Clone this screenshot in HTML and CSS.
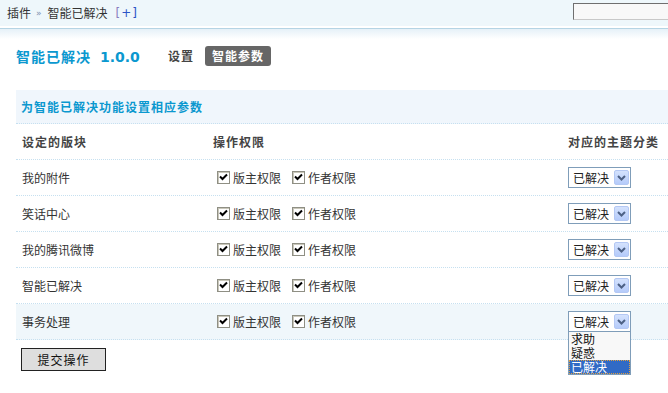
FILE: index.html
```html
<!DOCTYPE html>
<html lang="zh-CN">
<head>
<meta charset="utf-8">
<title>智能已解决</title>
<link rel="stylesheet" href="styles.css">
</head>
<body>
<div class="topbar">
  <div class="crumbs">
    <span>插件</span><span class="sep">»</span><span>智能已解决</span><a class="add"><span class="br">[</span>+<span class="br2">]</span></a>
  </div>
  <input class="search" type="text">
</div>
<div class="topline"></div>
<div class="main">
  <div class="titlebar">
    <h1 class="title">智能已解决<span class="ver">1.0.0</span></h1>
    <a class="tab">设置</a>
    <a class="tab active">智能参数</a>
  </div>
  <div class="grid">
    <div class="caption">为智能已解决功能设置相应参数</div>
    <div class="row heads"><div class="c1">设定的版块</div><div class="c2">操作权限</div><div class="c3">对应的主题分类</div></div>

    <div class="row">
      <div class="c1">我的附件</div>
      <div class="c2"><label class="chk"><input type="checkbox" checked>版主权限</label><label class="chk"><input type="checkbox" checked>作者权限</label></div>
      <div class="c3"><span class="sel"><span class="val">已解决</span><span class="arrow"><svg width="9" height="6" viewBox="0 0 9 6"><path d="M1 1 L4.5 4.5 L8 1" fill="none" stroke="#4d6185" stroke-width="2"/></svg></span></span></div>
    </div>
    <div class="row">
      <div class="c1">笑话中心</div>
      <div class="c2"><label class="chk"><input type="checkbox" checked>版主权限</label><label class="chk"><input type="checkbox" checked>作者权限</label></div>
      <div class="c3"><span class="sel"><span class="val">已解决</span><span class="arrow"><svg width="9" height="6" viewBox="0 0 9 6"><path d="M1 1 L4.5 4.5 L8 1" fill="none" stroke="#4d6185" stroke-width="2"/></svg></span></span></div>
    </div>
    <div class="row">
      <div class="c1">我的腾讯微博</div>
      <div class="c2"><label class="chk"><input type="checkbox" checked>版主权限</label><label class="chk"><input type="checkbox" checked>作者权限</label></div>
      <div class="c3"><span class="sel"><span class="val">已解决</span><span class="arrow"><svg width="9" height="6" viewBox="0 0 9 6"><path d="M1 1 L4.5 4.5 L8 1" fill="none" stroke="#4d6185" stroke-width="2"/></svg></span></span></div>
    </div>
    <div class="row">
      <div class="c1">智能已解决</div>
      <div class="c2"><label class="chk"><input type="checkbox" checked>版主权限</label><label class="chk"><input type="checkbox" checked>作者权限</label></div>
      <div class="c3"><span class="sel"><span class="val">已解决</span><span class="arrow"><svg width="9" height="6" viewBox="0 0 9 6"><path d="M1 1 L4.5 4.5 L8 1" fill="none" stroke="#4d6185" stroke-width="2"/></svg></span></span></div>
    </div>
    <div class="row hover">
      <div class="c1">事务处理</div>
      <div class="c2"><label class="chk"><input type="checkbox" checked>版主权限</label><label class="chk"><input type="checkbox" checked>作者权限</label></div>
      <div class="c3"><span class="sel open"><span class="val">已解决</span><span class="arrow"><svg width="9" height="6" viewBox="0 0 9 6"><path d="M1 1 L4.5 4.5 L8 1" fill="none" stroke="#4d6185" stroke-width="2"/></svg></span>
        <ul class="options"><li>求助</li><li>疑惑</li><li class="selected">已解决</li></ul>
      </span></div>
    </div>
  </div>
  <button class="submit" type="button">提交操作</button>
</div>
</body>
</html>
```

FILE: styles.css
```css
html, body {
  margin: 0;
  padding: 0;
  background: #fff;
  overflow: hidden;
}
body {
  font-family: "Noto Sans CJK SC", "Liberation Sans", sans-serif;
  font-size: 12px;
  color: #333;
  width: 668px;
  height: 393px;
}
.topbar {
  height: 26px;
  background: #eef7fb;
  border-bottom: 2px solid #fff;
  display: flex;
  align-items: center;
  padding-left: 7px;
  overflow: hidden;
}
.crumbs {
  display: flex;
  align-items: center;
  line-height: 14px;
  color: #333;
}
.crumbs .sep {
  color: #7d8fb0;
  font-family: "DejaVu Sans", sans-serif;
  font-size: 9px;
  margin: 0 6px 0 5px;
}
.crumbs .add {
  margin-left: 8px;
  color: #2b55c6;
  letter-spacing: 1px;
  font-family: "DejaVu Sans", sans-serif;
  font-size: 12px;
}
.crumbs .add .br { color: #8a7fbf; }
.search {
  margin-left: auto;
  margin-right: -40px;
  flex-shrink: 0;
  width: 135px;
  height: 17px;
  box-sizing: border-box;
  border: 1px solid;
  border-color: #6f6f6f #c8c8c8 #c8c8c8 #6f6f6f;
  background: #f8f8f8;
  padding: 0;
  align-self: flex-start;
  margin-top: 3px;
}
.topline {
  height: 10px;
  border-top: 1px solid #b5d4e4;
  background: linear-gradient(#e6f1f8, #fff);
}
.main {
  margin-left: 16px;
}
.titlebar {
  margin-top: 7px;
  height: 20px;
  display: flex;
  align-items: center;
}
.title {
  margin: 0;
  font-size: 14px;
  font-weight: bold;
  letter-spacing: 1px;
  color: #0b98cf;
  line-height: 20px;
}
.title .ver {
  font-family: "DejaVu Sans", sans-serif;
  font-size: 14px;
  letter-spacing: 0;
  margin-left: 9px;
}
.tab {
  font-weight: bold;
  color: #444;
  letter-spacing: 1px;
  line-height: 20px;
}
.titlebar .tab:first-of-type {
  margin-left: 28px;
}
.tab.active {
  margin-left: 11px;
  background: #666;
  color: #fff;
  border-radius: 3px;
  padding: 0 7px;
  height: 20px;
  width: 52px;
}
.grid {
  margin-top: 24px;
}
.caption {
  height: 34px;
  box-sizing: border-box;
  background: #f0f6fc;
  border-bottom: 1px dotted #c6e0f0;
  display: flex;
  align-items: center;
  padding-left: 5px;
  font-weight: bold;
  letter-spacing: 1px;
  color: #0b98cf;
}
.row {
  display: grid;
  grid-template-columns: 191px 355px 1fr;
  height: 36px;
  box-sizing: border-box;
  border-bottom: 1px dotted #c6e0f0;
  align-items: center;
  color: #333;
}
.row > div {
  padding-left: 6px;
  display: flex;
  align-items: center;
}
.row.heads {
  font-weight: bold;
  color: #444;
  letter-spacing: 1px;
}
.row.hover {
  background: #f0f7fb;
}
.row .c3 {
  padding-left: 6px;
}
.chk {
  display: inline-flex;
  align-items: center;
  margin-right: 7px;
}
.chk input {
  -webkit-appearance: none;
  appearance: none;
  width: 13px;
  height: 13px;
  margin: 0 3px 0 4px;
  box-sizing: border-box;
  border: 1px solid #8f8f84;
  box-shadow: inset 1px 1px 0 #c9c7ba;
  background: #fff url("data:image/svg+xml;utf8,<svg xmlns='http://www.w3.org/2000/svg' width='11' height='11' viewBox='0 0 11 11'><path d='M2 4.5 L4.5 7 L9 2.5' fill='none' stroke='black' stroke-width='2'/></svg>") no-repeat center;
}
.sel {
  position: relative;
  display: inline-flex;
  align-items: center;
  width: 63px;
  height: 21px;
  box-sizing: border-box;
  border: 1px solid #7f9db9;
  background: #fff;
  padding: 0 1px 0 4px;
  color: #222;
}
.sel .val {
  flex: 1;
}
.sel .arrow {
  width: 15px;
  height: 15px;
  box-sizing: border-box;
  border: 1px solid #b4c8f4;
  border-radius: 2px;
  background: linear-gradient(#d4e2fd, #b5cbfa);
  display: flex;
  align-items: center;
  justify-content: center;
}
.options {
  position: absolute;
  left: -1px;
  top: 19px;
  width: 63px;
  margin: 0;
  padding: 0;
  list-style: none;
  box-sizing: border-box;
  border: 1px solid #7f9db9;
  background: #f8f8f8;
  z-index: 5;
}
.options li {
  height: 14px;
  line-height: 14px;
  padding-left: 2px;
  color: #111;
}
.options li.selected {
  background: #316ac5;
  color: #fff;
  outline: 1px dotted #e0a040;
  outline-offset: -1px;
}
.submit {
  margin: 8px 0 0 5px;
  width: 85px;
  height: 23px;
  box-sizing: border-box;
  border: 1px solid #222;
  background: #dedede;
  font-family: "Noto Sans CJK SC", sans-serif;
  font-size: 12px;
  color: #111;
  padding: 0;
  letter-spacing: 1px;
}
```
